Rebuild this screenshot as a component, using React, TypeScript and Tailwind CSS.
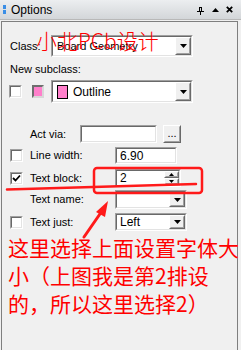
import type { ReactNode } from 'react'

const uiFont = { fontFamily: '"Liberation Sans", Arial, sans-serif' }
const cjkFont = { fontFamily: '"Noto Sans CJK SC", "Noto Sans", sans-serif' }

const Sunken = ({ className, children }: { className: string, children?: ReactNode }) => (
    <div className={`border border-t-[#a0a0a0] border-l-[#a0a0a0] border-b-white border-r-white ${className}`}>
        <div className="h-full w-full border border-t-[#696969] border-l-[#696969] border-b-[#e3e3e3] border-r-[#e3e3e3] bg-white flex items-center overflow-hidden">
            {children}
        </div>
    </div>
)

const Raised = ({ className, children }: { className: string, children?: ReactNode }) => (
    <div className={`border border-t-white border-l-white border-b-[#696969] border-r-[#696969] bg-[#f0f0f0] ${className}`}>
        <div className="h-full w-full border border-t-[#f0f0f0] border-l-[#f0f0f0] border-b-[#a0a0a0] border-r-[#a0a0a0] flex items-center justify-center">
            {children}
        </div>
    </div>
)

const DownArrow = () => (
    <svg width="7" height="4" viewBox="0 0 7 4"><path d="M0 0h7L3.5 4z" fill="#000" /></svg>
)

const Combo = ({ className, children }: { className: string, children?: ReactNode }) => (
    <Sunken className={className}>
        <div className="flex-1 flex items-center min-w-0">{children}</div>
        <Raised className="w-[16px] h-full shrink-0"><DownArrow /></Raised>
    </Sunken>
)

const Check = ({ checked }: { checked?: boolean }) => (
    <Sunken className="w-[13px] h-[13px]">
        {checked && (
            <svg width="9" height="9" viewBox="0 0 9 9" className="mx-auto">
                <path d="M1 4l2.5 2.5L8 1.5" stroke="#000" strokeWidth="1.8" fill="none" />
            </svg>
        )}
    </Sunken>
)

const Label = ({ children, className }: { children: ReactNode, className: string }) => (
    <span className={`text-[11px] text-black leading-none ${className}`}>{children}</span>
)

export default function App() {
    return (
        <div className="relative w-[241px] h-[350px] overflow-hidden bg-[#f0f0f0]" style={uiFont}>
            {/* title bar */}
            <div className="h-[20px] flex items-center bg-gradient-to-b from-[#eceef0] to-[#d3d6d9] border-b border-[#b8b8b8]">
                <div className="ml-[3px] flex flex-col gap-[1px]">
                    <span className="w-[3px] h-[4px] bg-[#3a8ee6]" />
                    <span className="w-[3px] h-[4px] bg-[#3a8ee6]" />
                </div>
                <span className="ml-[5px] text-[12px] text-black">Options</span>
                <div className="ml-auto mr-[8px] flex items-center">
                    <svg width="7" height="8" viewBox="0 0 7 8" className="mt-[2px]">
                        <path d="M2 0h3v4H2zM0 4h7v1H0zM3 5h1v3H3z" fill="#000" />
                        <path d="M3 1h1v3H3z" fill="#d8dadc" />
                    </svg>
                    <svg width="7" height="4" viewBox="0 0 7 4" className="ml-[8px]"><path d="M0 4h7L3.5 0z" fill="#000" /></svg>
                    <svg width="7" height="7" viewBox="0 0 7 7" className="ml-[7px]">
                        <path d="M0.8 0.8l5.4 5.4M6.2 0.8L0.8 6.2" stroke="#000" strokeWidth="1.8" />
                    </svg>
                </div>
            </div>

            {/* panel */}
            <div className="mt-[1px] ml-[1px] w-[237px] h-[329px] border border-[#7f7f7f] border-b-0">
                <div className="flex items-center mt-[13px] h-[22px]">
                    <Label className="ml-[8px] w-[41px]">Class:</Label>
                    <Combo className="w-[142px] h-[22px]">
                        <span className="ml-[4px] text-[11px]">Board Geometry</span>
                    </Combo>
                </div>

                <div className="mt-[5px] h-[14px] flex items-center">
                    <Label className="ml-[8px]">New subclass:</Label>
                </div>

                <div className="flex items-center mt-[4px] h-[23px]">
                    <div className="ml-[7px]"><Check /></div>
                    <div className="ml-[10px] w-[12px] h-[13px] border-2 border-t-[#6e6e6e] border-l-[#6e6e6e] border-b-[#d8d8d8] border-r-[#d8d8d8] bg-[#ff7fcb]" />
                    <Combo className="ml-[7px] w-[142px] h-[23px]">
                        <span className="ml-[4px] w-[11px] h-[14px] border border-black bg-[#ff7fcb]" />
                        <span className="ml-[5px] text-[12px]">Outline</span>
                    </Combo>
                </div>

                <div className="flex items-center mt-[22px] h-[18px]">
                    <Label className="ml-[28px] w-[50px]">Act via:</Label>
                    <Sunken className="w-[77px] h-[18px]" />
                    <Raised className="ml-[6px] w-[18px] h-[18px]">
                        <span className="text-[11px] leading-none -mt-[2px]">...</span>
                    </Raised>
                </div>

                <div className="flex items-center mt-[4px] h-[17px]">
                    <div className="ml-[8px]"><Check /></div>
                    <Label className="ml-[7px] w-[85px]">Line width:</Label>
                    <Sunken className="w-[62px] h-[17px]">
                        <span className="ml-[3px] text-[12px]">6.90</span>
                    </Sunken>
                </div>

                <div className="flex items-center mt-[5px] h-[18px]">
                    <div className="ml-[8px]"><Check checked /></div>
                    <Label className="ml-[7px] w-[85px]">Text block:</Label>
                    <Sunken className="w-[66px] h-[18px]">
                        <span className="ml-[3px] text-[12px] flex-1">2</span>
                        <div className="flex flex-col w-[15px] h-full shrink-0">
                            <Raised className="h-1/2 w-full">
                                <svg width="5" height="3" viewBox="0 0 5 3"><path d="M0 3h5L2.5 0z" fill="#000" /></svg>
                            </Raised>
                            <Raised className="h-1/2 w-full">
                                <svg width="5" height="3" viewBox="0 0 5 3"><path d="M0 0h5L2.5 3z" fill="#000" /></svg>
                            </Raised>
                        </div>
                    </Sunken>
                </div>

                <div className="flex items-center mt-[3px] h-[19px]">
                    <Label className="ml-[28px] w-[85px]">Text name:</Label>
                    <Combo className="w-[72px] h-[19px]" />
                </div>

                <div className="flex items-center mt-[4px] h-[18px]">
                    <div className="ml-[8px]"><Check /></div>
                    <Label className="ml-[7px] w-[85px]">Text just:</Label>
                    <Combo className="w-[72px] h-[18px]">
                        <span className="ml-[3px] text-[12px]">Left</span>
                    </Combo>
                </div>

                <p className="mt-[2px] ml-[6px] whitespace-nowrap text-[21px] leading-[28px] text-[#ff0000]" style={cjkFont}>
                    这里选择上面设置字体大<br />
                    小（上图我是第2排设<br />
                    的，所以这里选择2）
                </p>
            </div>

            {/* watermark */}
            <span className="absolute left-[36px] top-[27px] text-[21px] leading-[26px] font-light text-[#ff0000] whitespace-nowrap" style={cjkFont}>
                小北PCb设计
            </span>

            {/* red annotations */}
            <svg className="absolute inset-0 pointer-events-none" width="241" height="350" viewBox="0 0 241 350">
                <rect x="94" y="168" width="108" height="25" rx="3" fill="none" stroke="#ff1a1a" strokeWidth="2.5" />
                <path d="M7 189.5L196 184" stroke="#ff1a1a" strokeWidth="2.5" strokeLinecap="round" />
                <path d="M84 237L102 211" stroke="#ff1a1a" strokeWidth="3" strokeLinecap="round" />
                <path d="M108 201L96 212L105 217z" fill="#ff1a1a" />
            </svg>
        </div>
    )
}
